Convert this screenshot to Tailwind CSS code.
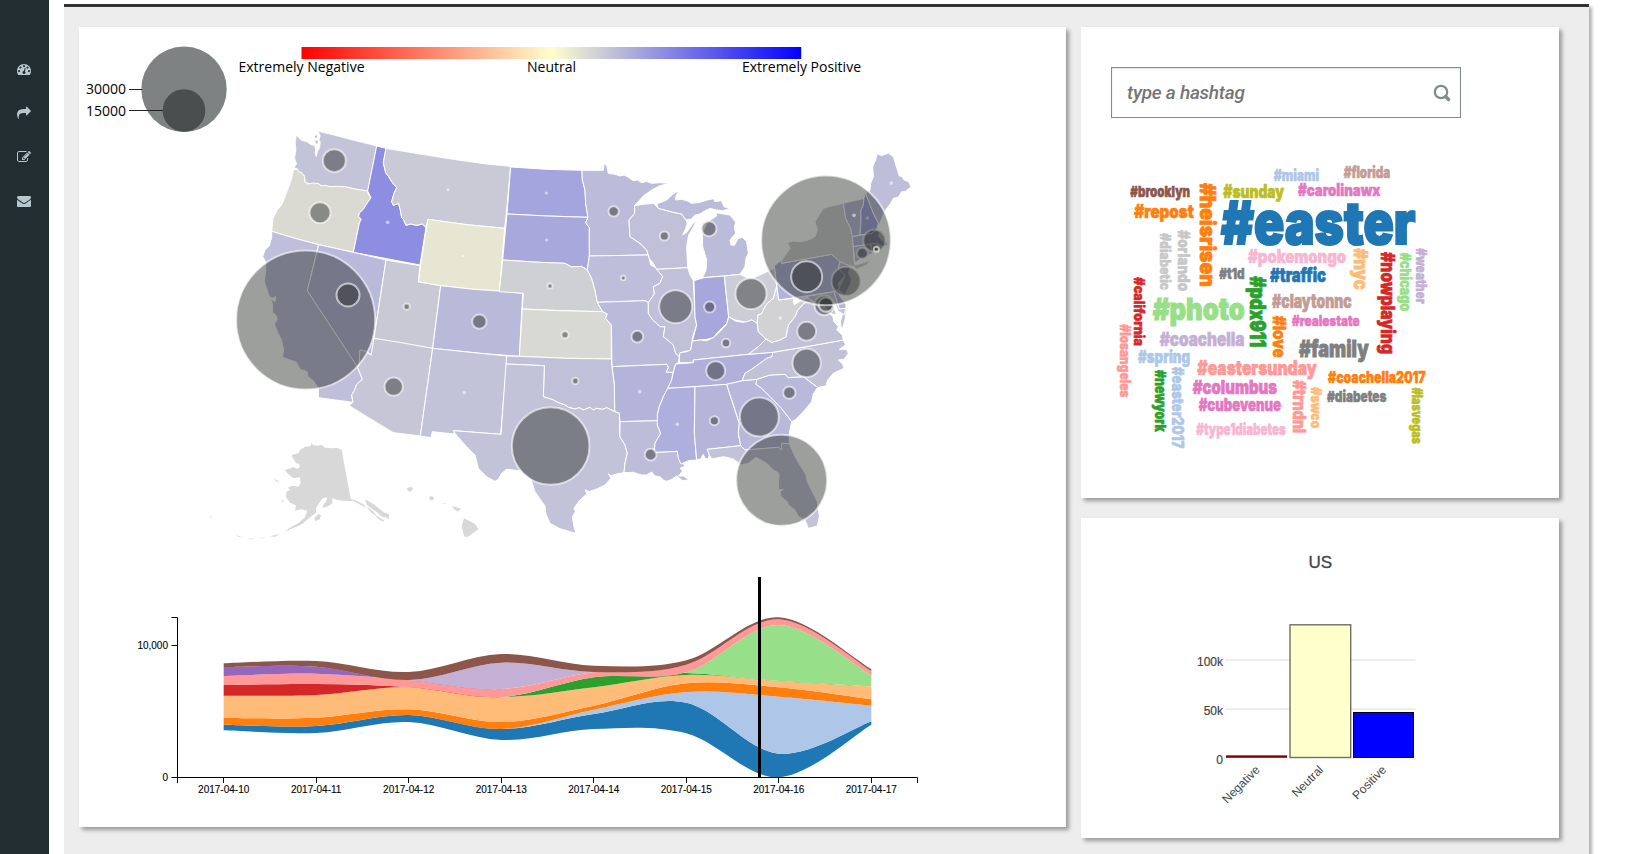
<!DOCTYPE html>
<html lang="en">
<head>
<meta charset="utf-8">
<title>Hashtag sentiment dashboard</title>
<script src="https://cdn.jsdelivr.net/npm/@tailwindcss/browser@4"></script>
</head>
<body class="flex h-screen overflow-hidden bg-white font-['Liberation_Sans',sans-serif]">
<aside class="flex w-[49px] shrink-0 flex-col items-center bg-[#222d32] pt-[62px] pr-[1px]">
  <nav class="flex flex-col gap-[30px]">
    <svg class="size-3.5" viewBox="0 0 1792 1792" fill="#b8c7ce"><path d="M384 1152q0-53-37.5-90.500t-90.500-37.500-90.500 37.500-37.500 90.500 37.500 90.500 90.500 37.500 90.500-37.500 37.500-90.500zm192-448q0-53-37.5-90.500t-90.500-37.500-90.500 37.500-37.500 90.500 37.500 90.500 90.500 37.500 90.500-37.500 37.500-90.500zm428 481l101-382q6-26-7.500-48.500t-38.500-29.500-48 6.500-30 39.500l-101 382q-60 5-107 43.500t-63 98.500q-20 77 20 146t117 89 146-20 89-117q16-60-6-117t-72-91zm660-33q0-53-37.500-90.500t-90.500-37.500-90.500 37.500-37.500 90.500 37.500 90.500 90.500 37.500 90.500-37.500 37.500-90.500zm-640-640q0-53-37.500-90.500t-90.500-37.500-90.500 37.500-37.500 90.500 37.500 90.500 90.500 37.500 90.500-37.500 37.500-90.500zm448 192q0-53-37.500-90.500t-90.500-37.500-90.500 37.500-37.500 90.500 37.500 90.500 90.500 37.500 90.500-37.500 37.500-90.500zm320 448q0 261-141 483-19 29-54 29h-1402q-35 0-54-29-141-221-141-483 0-182 71-348t191-286 286-191 348-71 348 71 286 191 191 286 71 348z"/></svg>
    <svg class="size-3.5" viewBox="0 0 1792 1792" fill="#b8c7ce"><path d="M1792 640q0 26-19 45l-512 512q-19 19-45 19t-45-19-19-45v-256h-224q-98 0-175.500 6t-154 21.500-133 42.500-105.500 69.500-80 101-48.500 138.500-17.500 181q0 55 5 123 0 6 2.500 23.500t2.500 26.500q0 15-8.500 25t-23.500 10q-16 0-28-17-7-9-13-22t-13.500-30-10.500-24q-127-285-127-451 0-199 53-333 162-403 875-403h224v-256q0-26 19-45t45-19 45 19l512 512q19 19 19 45z"/></svg>
    <svg class="size-3.5" viewBox="0 0 1792 1792" fill="#b8c7ce"><path d="M888 1184l116-116-152-152-116 116v56h96v96h56zm440-720q-16-16-33 1l-350 350q-17 17-1 33t33-1l350-350q17-17 1-33zm80 594v190q0 119-84.500 203.500t-203.500 84.500h-832q-119 0-203.500-84.500t-84.500-203.500v-832q0-119 84.500-203.500t203.500-84.500h832q63 0 117 25 15 7 18 23 3 17-9 29l-49 49q-14 14-32 8-23-6-45-6h-832q-66 0-113 47t-47 113v832q0 66 47 113t113 47h832q66 0 113-47t47-113v-126q0-13 9-22l64-64q15-15 35-7t20 29zm-96-738l288 288-672 672h-288v-288zm444 132l-92 92-288-288 92-92q28-28 68-28t68 28l152 152q28 28 28 68t-28 68z"/></svg>
    <svg class="size-3.5" viewBox="0 0 1792 1792" fill="#b8c7ce"><path d="M1792 710v794q0 66-47 113t-113 47h-1472q-66 0-113-47t-47-113v-794q44 49 101 87 362 246 497 345 57 42 92.500 65.500t94.500 48 110 24.500h2q51 0 110-24.500t94.500-48 92.500-65.500q170-123 498-345 57-39 100-87zm0-294q0 79-49 151t-122 123q-376 261-468 325-10 7-42.500 31t-54 38.500-52 32.500-57.500 27-50 9h-2q-23 0-50-9t-57.500-27-52-32.500-54-38.500-42.500-31q-91-64-262-182.500t-205-142.500q-62-42-117-115.500t-55-136.500q0-78 41.500-130t118.500-52h1472q65 0 112.500 47t47.500 113z"/></svg>
  </nav>
</aside>
<main class="mt-1 ml-[15px] flex h-[850px] w-[1525px] shrink-0 gap-[15px] border-t-[3px] border-[#333] bg-[#ededed] pt-5 pl-[15px] shadow-[3px_3px_3px_rgba(0,0,0,0.3)]">
  <section class="h-[800px] w-[987px] bg-white shadow-[3px_3px_4px_rgba(0,0,0,0.35)]">
    <svg class="block h-[800px] w-[987px]" viewBox="79 27 987 800">
      <defs><linearGradient id="tone"><stop offset="0" stop-color="#f00"/><stop offset=".5" stop-color="#ffffcc"/><stop offset="1" stop-color="#00f"/></linearGradient></defs>
      <!-- size legend -->
      <g fill="#262b2b" fill-opacity=".59">
        <circle cx="184" cy="89.200" r="42.700"/><circle cx="184" cy="110.500" r="21.300"/>
      </g>
      <path d="M129 89.500h13M129 110.500h34" stroke="#222" fill="none"/>
      <rect x="301.500" y="47" width="499.700" height="12" fill="url(#tone)"/>
      <g class="font-['Open_Sans',sans-serif] text-[14px]" fill="#000">
        <text x="86" y="94" textLength="40">30000</text><text x="86" y="115.500" textLength="40">15000</text>
        <text x="238.500" y="72" textLength="126">Extremely Negative</text>
        <text x="527" y="72" textLength="49">Neutral</text>
        <text x="742" y="72" textLength="119">Extremely Positive</text>
      </g>
      <!-- map -->
      <g transform="scale(.333333)" stroke="#fff" stroke-width="3" stroke-linejoin="round">
        <g transform="translate(660 360)">
          <path fill="#c4c4d8" stroke-width="2" d="M229 46L244 61 262 66 272 74 284 77 287 90 285 100 289 110 292 95 299 84 301 66 297 60 301 48 295 34 340 45 400 61 470 78 443 213 410 208 375 200 330 200 305 197 295 191 270 191 256 187 254 170 245 158 235 155 232 146 222 143 230 132 224 115 228 90 226 70Z"/>
          <path fill="#c4c4d8" stroke="none" d="M284 48l6-3 2 8-6 1zM285 64l7-3 2 7-5 4z"/>
          <path fill="#dadad2" d="M220 150L232 147 236 155 245 158 253 168 254 185 264 192 280 189 295 191 303 197 315 196 330 200 350 199 375 200 410 208 443 213 445 223 453 233 440 252 430 268 418 279 416 290 424 297 418 310 400 397 296 374 225 355 155 334 159 295 173 268 185 255 195 230 208 195 215 175Z"/>
          <path fill="#8d8de2" d="M470 78L498 85 490 128 495 150 498 160 505 168 515 185 530 203 522 220 515 245 520 256 536 250 542 275 545 293 550 298 558 316 572 312 590 316 607 312 618 322 600 435 400 397 418 310 424 297 416 290 418 279 430 268 440 252 453 233 443 213Z"/>
          <path fill="#cacad6" d="M498 85L600 102 700 118 800 132 872 139 860 270 854 325 740 314 624 298 618 322 607 312 590 316 572 312 558 316 550 298 545 293 542 275 536 250 520 256 515 245 522 220 530 203 515 185 505 168 498 160 495 150 490 128Z"/>
          <path fill="#e6e6d2" d="M624 298L740 314 854 325 838 513 760 508 662 497 595 486 607 400Z"/>
          <path fill="#bfbfdb" d="M155 334L225 355 296 374 262 512 412 740 420 760 427 778 410 793 403 812 395 825 399 847 295 833 295 805 280 782 262 768 262 755 240 748 230 728 205 718 187 712 191 690 184 660 170 630 163 612 172 598 167 585 158 578 157 550 150 535 165 545 167 530 157 535 148 530 133 485 137 450 137 425 128 410 135 390 148 378 155 352Z"/>
          <path fill="#b9b9db" d="M296 374L400 397 498 420 462 655 455 705 438 694 420 690 417 738 412 740 262 512Z"/>
          <path fill="#c9c9d6" d="M498 420L600 437 595 486 662 497 638 685 550 672 462 655Z"/>
          <path fill="#b9b9da" d="M662 497L760 508 838 513 908 520 898 709 780 700 638 685Z"/>
          <path fill="#c6c6d7" d="M462 655L550 669 638 685 601 948 520 938 387 857 399 847 395 825 403 812 410 793 427 778 420 760 412 740 417 738 420 690 438 694 453 706Z"/>
          <path fill="#c2c2d8" d="M638 685L780 700 860 708 860 732 842 943 702 932 703 942 637 935 633 953 601 948Z"/>
        </g>
        <g transform="translate(1500 420)">
          <path fill="#a4a4de" d="M32 81L140 88 246 91 247 120 255 150 257 190 264 232 140 228 21 222Z"/>
          <path fill="#a8a8dd" d="M21 222L140 228 264 232 257 248 268 263 268 348 262 390 245 379 215 381 195 370 120 367 8 360Z"/>
          <path fill="#bcbcda" d="M246 91L310 91 312 72 320 76 325 100 345 103 360 108 372 105 385 112 400 122 412 120 425 128 440 124 455 130 480 128 508 130 480 137 455 150 430 168 404 197 404 220 387 240 390 290 420 310 440 330 445 345 268 348 268 263 257 248 264 232 257 190 255 150 247 120Z"/>
          <path fill="#cfd0d4" d="M8 360L120 367 195 370 215 381 245 379 262 390 275 415 285 450 292 487 308 515 180 512 67 507 70 460 -2 455Z"/>
          <path fill="#d8d9d3" d="M67 507L180 512 308 515 322 522 317 535 334 555 334 657 200 655 58 649Z"/>
          <path fill="#bebeda" d="M268 348L445 345 452 375 470 385 488 410 480 430 460 440 463 462 445 488 435 482 350 485 292 487 285 450 275 415 262 390Z"/>
          <path fill="#babadb" d="M292 487L435 482 445 488 445 520 458 540 470 550 480 560 495 560 490 590 505 602 520 615 527 640 538 650 535 668 527 672 520 697 498 697 505 683 500 673 336 680 334 555 317 535 322 522 308 515Z"/>
          <path fill="#b4b4db" d="M336 680L500 673 505 683 498 697 520 697 515 720 505 745 490 770 478 800 472 825 475 842 360 845 358 820 344 815 343 735Z"/>
          <path fill="#c0c0d8" d="M20 648L58 649 200 655 334 657 336 680 343 735 344 815 320 803 308 808 290 805 280 810 270 802 250 810 238 803 225 807 205 802 195 795 175 788 160 780 146 775 130 770 133 677 18 672Z"/>
          <path fill="#c2c2d8" d="M18 672L133 677 130 770 146 775 160 780 175 788 195 795 205 802 225 807 238 803 250 810 270 802 280 810 290 805 308 808 320 803 344 815 358 820 360 890 375 915 382 940 375 970 372 998 345 1003 333 1008 325 1001 333 1015 315 1035 290 1047 267 1055 256 1049 260 1062 238 1082 222 1105 226 1115 217 1130 222 1160 228 1180 214 1176 180 1166 150 1150 138 1122 135 1098 105 1055 92 1015 60 992 20 988 5 1000 -5 1018 -15 1024 -40 1010 -65 985 -70 965 -75 945 -100 920 -127 890 -140 872 3 883Z"/>
          <path fill="#bdbdda" d="M360 845L475 842 472 855 482 880 465 910 462 937 532 934 536 955 545 968 556 978 540 985 548 993 535 1008 550 1008 567 1020 548 1022 530 1008 515 1018 500 1024 490 1020 480 1010 465 1008 455 996 440 1005 425 1005 400 997 372 998 375 970 382 940 375 915 360 890Z"/>
          <path fill="#c0c0d8" d="M404 197L430 193 460 190 475 205 520 217 545 222 558 240 562 252 556 268 548 285 560 277 577 253 592 238 580 262 566 285 560 320 563 383 470 388 460 370 448 355 445 345 440 330 420 310 390 290 387 240 404 220Z"/>
          <path fill="#bbbbda" d="M470 192L500 180 520 162 537 152 528 168 526 180 545 178 560 182 575 190 600 187 622 180 640 176 645 185 664 182 672 200 690 205 668 212 650 210 630 205 610 215 600 222 585 225 575 237 558 240 545 222 520 217 475 205Z"/>
          <path fill="#bbbbda" d="M608 413L618 390 620 360 608 320 607 280 620 250 635 238 650 228 648 218 670 222 690 225 700 238 707 247 703 262 707 280 690 300 693 315 703 316 715 295 727 292 740 305 745 340 738 355 735 380 720 403 673 408Z"/>
          <path fill="#c0c0d8" d="M470 388L563 383 570 405 580 422 585 530 590 555 578 590 575 615 572 632 555 634 540 640 538 650 527 640 520 615 505 602 490 590 495 560 480 560 470 550 458 540 445 520 445 488 463 462 460 440 480 430 488 410Z"/>
          <path fill="#a7a7dc" d="M582 422L612 413 673 408 686 530 680 550 655 575 640 593 620 598 600 600 577 603 590 555 585 530Z"/>
        </g>
        <g transform="translate(2040 420)">
          <path fill="#cdcdd6" d="M133 408L180 403 200 413 215 416 240 405 283 385 290 440 280 475 262 490 255 500 244 522 234 525 232 550 215 540 200 547 190 545 165 540 150 532 146 530Z"/>
          <path fill="#bbbbd9" d="M146 530L165 543 190 547 200 545 215 540 232 550 235 575 258 597 235 620 205 643 40 660 40 668 -2 668 -2 650 0 638 20 635 32 630 37 603 60 600 80 602 100 593 115 580 140 553Z"/>
          <path fill="#b0b0da" d="M-13 672L40 668 40 660 205 643 278 637 276 650 260 655 240 670 215 688 195 700 190 712 188 722 140 733 45 740 -37 745 -25 720 -20 697Z"/>
          <path fill="#afafdd" d="M-37 745L45 740 43 880 50 960 25 962 3 972 -5 955 -8 934 -78 937 -75 910 -58 880 -68 855 -68 825 -62 800 -50 770Z"/>
          <path fill="#b5b5da" d="M45 740L140 733 165 810 178 850 175 880 182 917 82 928 88 945 85 957 75 955 70 943 62 957 50 960 43 880Z"/>
          <path fill="#b8b8db" d="M140 733L188 722 230 718 228 733 245 745 265 765 300 800 320 825 335 845 328 880 328 911 305 910 305 930 295 922 195 930 182 917 175 880 178 850 165 810Z"/>
          <path fill="#c2c2d8" d="M82 928L182 917 195 930 295 922 305 930 305 910 328 911 345 950 378 1005 382 1025 412 1085 418 1130 412 1158 385 1165 375 1140 355 1130 345 1110 325 1095 322 1085 303 1070 300 1055 310 1048 295 1050 297 1000 280 990 260 970 228 952 205 970 185 975 160 957 130 950 95 957 88 945Z"/>
          <path fill="#b9b9da" d="M230 718L270 705 315 703 325 713 370 710 413 742 400 762 395 785 370 815 345 840 335 845 320 825 300 800 265 765 245 745 228 733Z"/>
          <path fill="#c1c1d8" d="M278 637L380 620 490 600 497 615 478 628 500 628 505 640 492 658 475 660 488 672 492 685 460 700 443 720 438 738 413 742 370 710 325 713 315 703 270 705 230 718 188 722 190 712 195 700 215 688 240 670 260 655 276 650Z"/>
          <path fill="#c1c1d8" d="M205 643L235 620 258 597 275 607 300 600 318 590 325 555 345 530 352 512 372 490 378 485 395 487 415 500 440 515 458 528 462 545 475 560 470 570 487 585 490 600 380 620 278 637ZM500 506L495 540 485 573 481 545 490 515Z"/>
          <path fill="#d2d2d4" d="M290 440L296 480 340 475 342 495 365 480 395 470 400 485 378 487 372 490 352 512 345 530 325 555 318 590 300 600 275 607 258 597 235 575 232 550 234 525 244 522 255 500 262 490 280 475Z"/>
          <path fill="#b2b2da" d="M283 377L305 360 305 370 455 343 480 365 475 385 495 407 475 430 478 445 462 455 296 480Z"/>
          <path fill="#cfcfd3" d="M305 362L330 325 322 308 340 303 360 305 385 300 405 290 412 270 405 245 430 205 445 200 490 190 497 235 512 265 518 290 522 362 525 375 545 370 572 360 560 375 530 388 522 380 500 375 480 365 455 343 305 370Z"/>
          <path fill="#bcbcda" d="M490 190L552 175 550 195 543 210 543 240 540 285 517 290 512 265 497 235Z"/>
          <path fill="#a0a0de" d="M552 175L557 160 580 220 595 250 590 270 575 280 540 285 543 240 543 210 550 195Z"/>
          <path fill="#bebedb" d="M557 160L570 150 572 130 580 110 578 80 587 60 591 41 605 47 625 39 640 50 658 108 666 110 672 120 685 124 693 140 675 155 665 155 655 172 640 175 632 190 617 210 605 235 598 255 580 220Z"/>
          <path fill="#b5b5da" d="M517 290L575 280 590 270 598 277 596 290 610 305 625 305 620 312 640 310 610 320 590 310 520 320Z"/>
          <path fill="#bbbbd9" d="M520 320L572 312 578 340 545 355 525 368ZM572 312L590 310 595 328 578 340Z"/>
          <path fill="#bdbdd9" d="M480 365L512 380 505 400 514 415 512 430 495 465 475 450 495 407 475 385Z"/>
          <path fill="#c0c0d8" d="M345 476L462 455 478 507 498 503 492 525 475 512 465 490 462 505 470 525 450 520 430 495 400 485 380 470 360 480Z"/>
          <path fill="#b5b5da" d="M462 455L475 450 480 470 498 492 498 505 478 507Z"/>
        </g>
        <g transform="translate(570 1140)" fill="#d8d8d8" stroke="none">
          <path d="M305 228L308 224 325 220 330 210 345 200 362 198 364 189 370 196 385 197 395 195 405 203 425 205 440 203 455 210 482 357 500 362 520 373 530 384 512 375 490 363 465 363 440 360 427 354 427 370 415 378 400 384 398 378 408 364 412 352 398 355 388 368 378 385 378 398 360 412 340 430 320 440 300 448 282 457 298 444 325 430 345 412 352 392 335 388 315 392 318 376 300 368 288 350 290 335 300 330 294 322 308 317 325 320 332 310 330 292 310 295 292 280 285 270 310 262 322 266 330 262 328 252 318 250Z"/>
          <path d="M373 415l12-13 8 4-4 12-12 6zM526 358L550 372 580 396 597 403 597 418 588 412 578 411 560 396 545 386 530 374zM530 380l18 12 10 14 22 14 4 6-14-5-16-16-12-8zM250 297l10 3 8 8-6-2zM272 361l11 2-4 4zM240 469l28-7-12 8zM138 464l18 8-10-1zM170 475l28 2-16 1zM207 474l20-3-10 4zM60 409l6 3-4 1z"/>
          <path d="M650 326l12-6 7 5-6 10-8-2zM717 352l8-4 8 6-4 6-9 1zM757 370l12-1-5 3zM785 379l12 2 16 5-10 9-8-5zM822 415L855 432 865 447 835 470 823 470 815 440Z"/>
        </g>
        <g id="bubbles" fill="#20241f" stroke="#fff"></g>
      </g>
      <!-- hashtag stream -->
      <g id="stream" transform="translate(150 570) scale(.333333)"></g>
      <path d="M171.500 617.500h6v160h-6M171.500 645.500h6M177.500 783v-5.500h740v5.500M223.500 777.500v5.500M316.500 777.500v5.500M408.500 777.500v5.500M501.500 777.500v5.500M593.500 777.500v5.500M686.500 777.500v5.500M778.500 777.500v5.500M871.500 777.500v5.500" fill="none" stroke="#000"/>
      <rect x="758" y="577" width="3" height="200"/>
      <g class="text-[10px]" text-anchor="middle" stroke="#000" stroke-width=".1">
        <text x="223.700" y="793">2017-04-10</text><text x="316.200" y="793">2017-04-11</text><text x="408.700" y="793">2017-04-12</text><text x="501.300" y="793">2017-04-13</text><text x="593.800" y="793">2017-04-14</text><text x="686.300" y="793">2017-04-15</text><text x="778.800" y="793">2017-04-16</text><text x="871.300" y="793">2017-04-17</text>
      </g>
      <g class="text-[10px]" text-anchor="end" stroke="#000" stroke-width=".1"><text x="168" y="649">10,000</text><text x="168" y="781">0</text></g>
    </svg>
  </section>
  <div class="flex w-[478px] flex-col gap-5">
    <section class="h-[471px] bg-white pt-10 pl-[30px] shadow-[3px_3px_4px_rgba(0,0,0,0.35)]">
      <div class="flex h-[51px] w-[350px] items-center justify-between border border-[#7f8c8d] pr-[9px] pl-[15px] shadow-[inset_0_1px_2px_rgba(0,0,0,0.12)]">
        <span class="pt-px font-['Roboto',sans-serif] text-[19px] font-medium tracking-[-0.250px] text-[#757575] italic">type a hashtag</span>
        <svg class="size-[18px]" viewBox="0 0 18 18" fill="none" stroke="#7f8c8d"><circle cx="8" cy="8" r="6.200" stroke-width="2.200"/><path d="M12.500 12.500l3 3" stroke-width="3.400" stroke-linecap="round"/></svg>
      </div>
      <svg class="block h-[370px] w-[360px]" viewBox="1111 118 360 370"><g id="cloud" class="font-['Inter',sans-serif] font-black" transform="translate(1100 118)"></g></svg>
    </section>
    <section class="h-[320px] bg-white shadow-[3px_3px_4px_rgba(0,0,0,0.35)]">
      <svg class="block h-[320px] w-[478px]" viewBox="1081 518 478 320" fill="#444">
        <text x="1320.300" y="568" text-anchor="middle" class="text-[17px]" stroke="#444" stroke-width=".3">US</text>
        <path d="M1225.500 660h190M1225.500 709h190" stroke="#eee" stroke-width="2"/>
        <rect x="1226" y="755.500" width="61" height="2.300" fill="#800000"/>
        <path d="M1226 755.500h61" stroke="#666" stroke-width=".7"/>
        <rect x="1290" y="624.800" width="60.700" height="132.700" fill="#ffffcc" stroke="#6f6f64" stroke-width="1.400"/>
        <rect x="1353.500" y="712.500" width="60" height="45" fill="#00f" stroke="#000"/>
        <g text-anchor="end" class="text-[12px]">
          <g stroke="#444" stroke-width=".2"><text x="1223" y="665.500">100k</text><text x="1223" y="714.500">50k</text><text x="1223" y="763.500">0</text></g>
          <text transform="translate(1260.500 770.500) rotate(-45)">Negative</text>
          <text transform="translate(1324 770.500) rotate(-45)">Neutral</text>
          <text transform="translate(1387 770.500) rotate(-45)">Positive</text>
        </g>
      </svg>
    </section>
  </div>
</main>
<script>
const NS = 'http://www.w3.org/2000/svg';
function add(parent, tag, attrs, text) {
  const el = document.createElementNS(NS, tag);
  for (const k in attrs) el.setAttribute(k, attrs[k]);
  if (text) el.textContent = text;
  parent.appendChild(el);
}

// Tweet volume per state: x, y, radius
const west = [[343,122,33],[300,278,30],[684,209,3],[503,307,4],[728,408,2],[257,600,207],[384,525,33],[560,560,8],[778,605,20],[521,800,26],[733,818,4]];
const middle = [[139,159,3],[140,300,3],[341,214,14],[493,288,12],[627,266,21],[150,438,6],[370,414,5],[527,500,48],[629,501,15],[195,584,9],[412,590,16],[678,609,11],[226,723,8],[419,755,4],[647,692,27],[152,918,115],[452,944,16],[532,853,4],[643,842,12]];
const east = [[213,461,45],[301,534,4],[380,574,27],[380,669,41],[328,758,17],[238,831,57],[305,1021,135],[498,424,42],[433,496,28],[438,494,20],[583,302,32],[547,340,15],[562,234,4],[438,301,193],[380,410,45],[589,328,6],[522,226,4],[634,129,4]];
const bubbles = document.getElementById('bubbles');
[[west,660,360],[middle,1500,420],[east,2040,420]].forEach(([list,dx,dy]) =>
  list.forEach(([x,y,r]) => r < 5
    ? add(bubbles,'circle',{cx:x+dx,cy:y+dy,r:r+1.5,fill:'#fff','fill-opacity':.55,stroke:'none'})
    : add(bubbles,'circle',{cx:x+dx,cy:y+dy,r:r+1.5,'fill-opacity':.44,'stroke-opacity':.6,'stroke-width':6})));

// Stream layers, bottom to top
const edges = [
  [481,489,456,510,477,490,622,464],
  [464,468,435,477,432,398,551,454],
  [464,468,435,477,419,366,380,407],
  [444,443,418,456,407,340,352,388],
  [377,375,351,381,352,315,333,349],
  [377,375,351,381,322,309,333,349],
  [377,375,351,381,322,307,165,316],
  [345,342,351,381,322,307,165,316],
  [318,311,330,357,306,284,148,303],
  [291,290,330,357,306,284,148,303],
  [291,290,330,278,306,284,148,303],
  [280,273,306,252,287,271,142,298]];
const hues = ['#1f77b4','#aec7e8','#ff7f0e','#ffbb78','#2ca02c','#98df8a','#d62728','#ff9896','#9467bd','#c5b0d5','#8c564b'];
const days = [221,498.5,776,1054,1331.5,1609,1886,2164];
function curve(pts) {
  let d = pts[0].join(' ');
  for (let i = 0; i < pts.length - 1; i++) {
    const a = pts[Math.max(i-1,0)], b = pts[i], c = pts[i+1], e = pts[Math.min(i+2,pts.length-1)];
    d += ' C' + [b[0]+(c[0]-a[0])/6, b[1]+(c[1]-a[1])/6, c[0]-(e[0]-b[0])/6, c[1]-(e[1]-b[1])/6, c[0], c[1]].join(' ');
  }
  return d;
}
hues.forEach((fill,i) => {
  const low = edges[i].map((y,k) => [days[k],y]);
  const high = edges[i+1].map((y,k) => [days[k],y]).reverse();
  add(document.getElementById('stream'),'path',{fill,d:'M'+curve(low)+' L'+curve(high)+'Z'});
});

// Word cloud: word, start, end, baseline, height, colour, vertical
const words = [
  ['miami',521,657,78,34,'#aec7e8'],['florida',731,871,69,34,'#c49c94'],['brooklyn',91,270,125,32,'#8c564b'],
  ['sunday',370,552,129,38,'#bcbd22'],['carolinawx',594,841,122,35,'#e377c2'],['repost',103,281,190,38,'#ff7f0e'],
  ['easter',363,946,268,125,'#1f77b4'],['pokemongo',444,738,323,38,'#f7b6d2'],['traffic',510,678,381,40,'#1f77b4'],
  ['t1d',358,434,372,32,'#7f7f7f'],['claytonnc',516,755,459,39,'#c49c94'],['photo',158,434,494,64,'#98df8a'],
  ['realestate',576,779,513,31,'#e377c2'],['coachella',179,433,572,40,'#c5b0d5'],['family',597,806,607,48,'#7f7f7f'],
  ['spring',114,270,623,36,'#aec7e8'],['eastersunday',292,650,661,42,'#ff9896'],['coachella2017',684,977,684,34,'#ff7f0e'],
  ['columbus',278,531,716,40,'#e377c2'],['cubevenue',296,543,767,36,'#e377c2'],['diabetes',681,859,740,32,'#7f7f7f'],
  ['type1diabetes',289,557,839,34,'#f7b6d2'],
  ['heisrisen',84,395,299,46,'#ff7f0e',1],['diabetic',235,405,181,30,'#c7c7c7',1],['orlando',226,408,235,33,'#c7c7c7',1],
  ['nyc',280,404,763,39,'#ffbb78',1],['nowplaying',291,597,844,39,'#d62728',1],['chicago',293,468,901,32,'#98df8a',1],
  ['weather',280,446,948,30,'#c5b0d5',1],['california',367,573,103,31,'#d62728',1],['pdx911',364,577,449,45,'#2ca02c',1],
  ['losangeles',508,727,60,30,'#ff9896',1],['love',482,608,520,36,'#ff7f0e',1],['newyork',645,831,166,32,'#2ca02c',1],
  ['easter2017',636,880,215,34,'#aec7e8',1],['trndnl',676,834,580,36,'#ff9896',1],['swco',697,820,634,30,'#ffbb78',1],
  ['lasvegas',698,867,936,30,'#bcbd22',1]];
words.forEach(([w,a,b,base,h,fill,v]) => {
  const t = v ? `translate(${base/3} ${37+a/3}) rotate(90)` : `translate(${a/3} ${37+base/3})`;
  const size = h/3/.7;
  add(document.getElementById('cloud'),'text',{transform:t,fill,stroke:fill,'stroke-width':size*.035,textLength:(b-a)/3,lengthAdjust:'spacingAndGlyphs','font-size':size},'#'+w);
});
</script>
</body>
</html>
